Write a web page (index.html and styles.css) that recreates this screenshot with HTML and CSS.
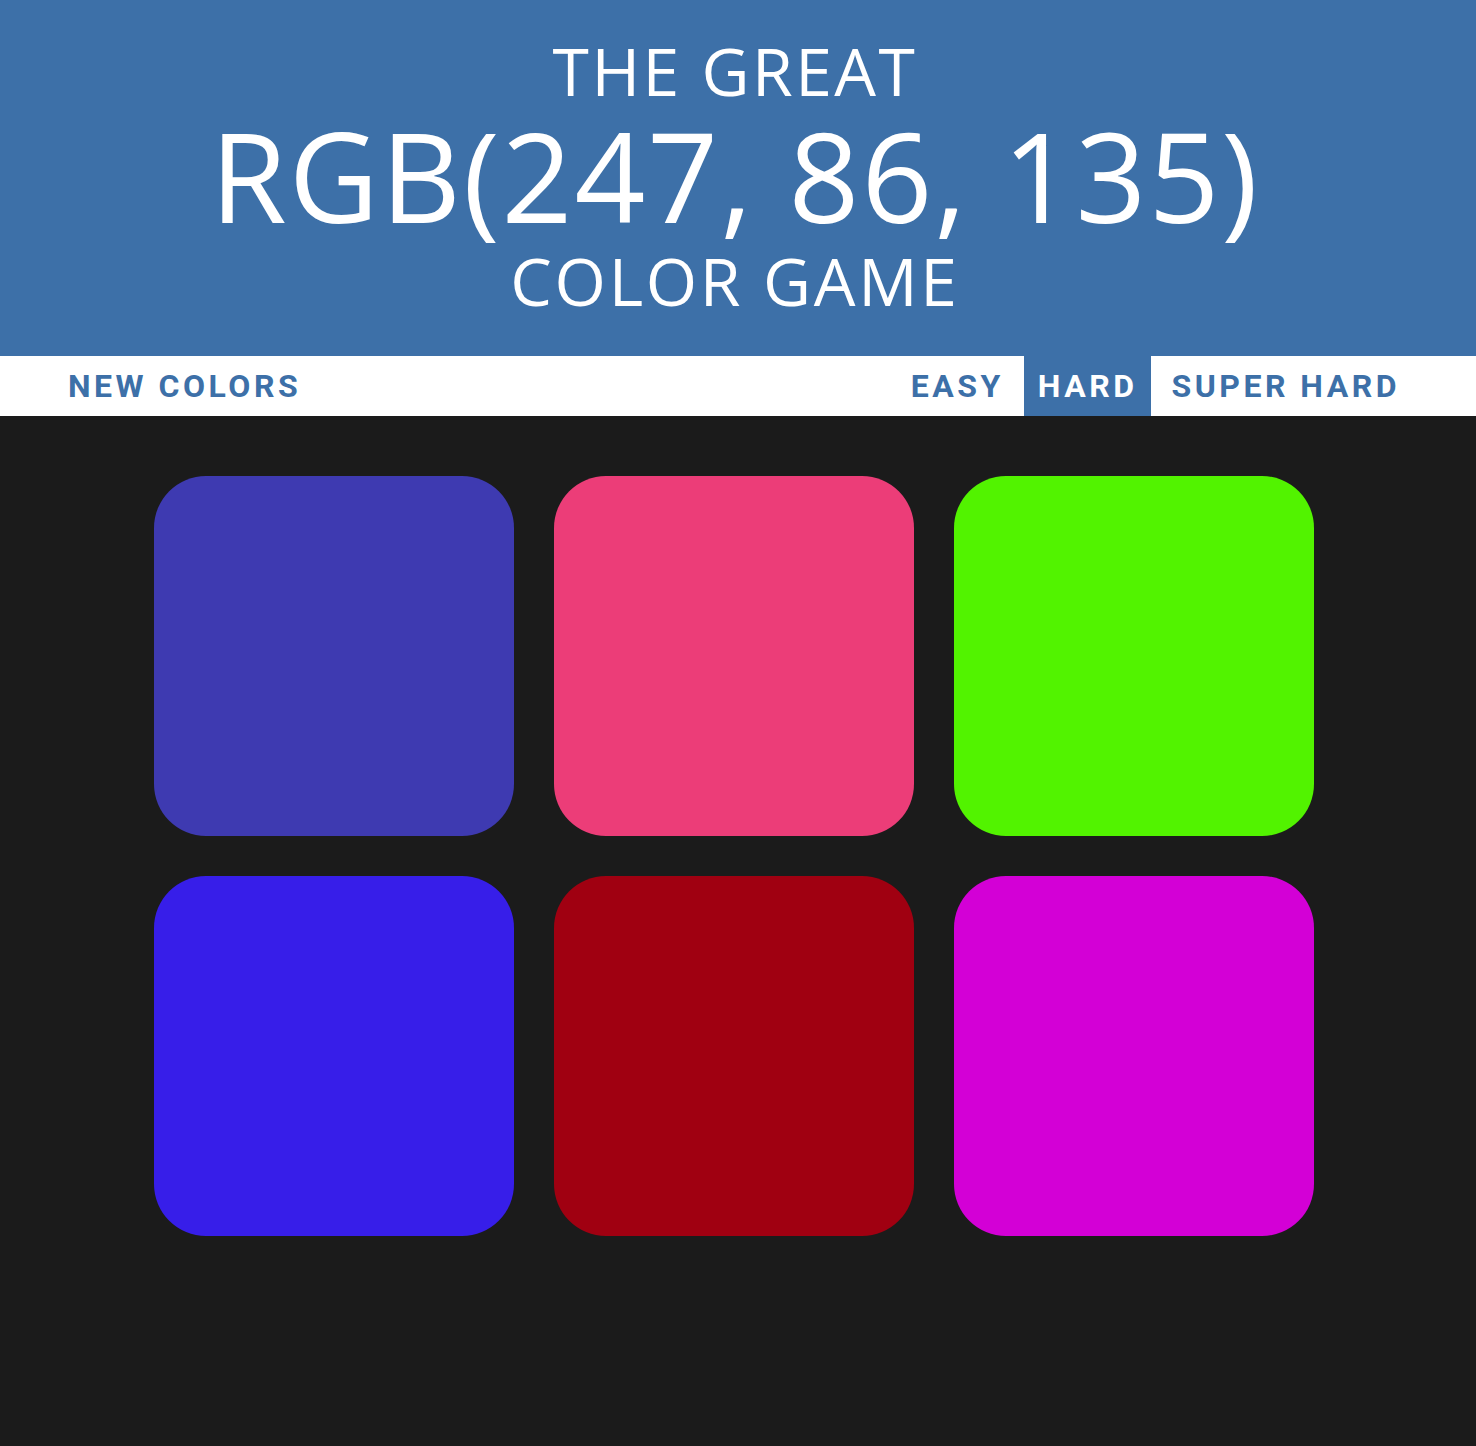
FILE: index.html
```html
<!DOCTYPE html>
<html>
<head>
<meta charset="utf-8">
<link rel="stylesheet" href="styles.css">
</head>
<body>
<header class="banner">
  <div class="line-small great">THE GREAT</div>
  <div class="line-big">RGB(247, 86, 135)</div>
  <div class="line-small game">COLOR GAME</div>
</header>
<nav class="bar">
  <button class="btn new">NEW COLORS</button>
  <div class="modes">
    <button class="btn">EASY</button>
    <button class="btn active">HARD</button>
    <button class="btn">SUPER HARD</button>
  </div>
</nav>
<main class="board">
  <div class="grid">
    <div class="sq" style="background: rgb(62, 58, 177)"></div>
    <div class="sq" style="background: rgb(236, 61, 120)"></div>
    <div class="sq" style="background: rgb(82, 243, 0)"></div>
    <div class="sq" style="background: rgb(55, 30, 233)"></div>
    <div class="sq" style="background: rgb(160, 0, 17)"></div>
    <div class="sq" style="background: rgb(211, 0, 214)"></div>
  </div>
</main>
</body>
</html>
```

FILE: styles.css
```css
html, body {
  margin: 0;
  padding: 0;
  background: #1b1b1b;
  height: 100%;
}
body {
  font-family: "Open Sans", sans-serif;
}
.banner {
  background: #3d70a8;
  color: #fff;
  height: 356px;
  box-sizing: border-box;
  padding: 30px 6px 0 0;
  text-align: center;
  font-family: "Open Sans", sans-serif;
  font-weight: 400;
}
.line-small {
  font-size: 66px;
  line-height: 80px;
}
.great {
  letter-spacing: 2.5px;
}
.game {
  letter-spacing: 2.7px;
}
.line-big {
  font-size: 124px;
  line-height: 130px;
  letter-spacing: 2px;
}
.bar {
  background: #fff;
  height: 60px;
  display: flex;
  justify-content: space-between;
  align-items: stretch;
  padding: 0 62px 0 54px;
}
.modes {
  display: flex;
  gap: 6px;
}
.btn {
  border: none;
  background: transparent;
  color: #3d70a8;
  font-family: Roboto, sans-serif;
  font-weight: 700;
  font-size: 32px;
  letter-spacing: 3.5px;
  padding: 0 14px;
  margin: 0;
  cursor: pointer;
}
.btn.active {
  background: #3d70a8;
  color: #fff;
}
.board {
  padding-top: 60px;
}
.grid {
  display: grid;
  grid-template-columns: repeat(3, 360px);
  gap: 40px;
  padding-left: 154px;
}
.sq {
  width: 360px;
  height: 360px;
  border-radius: 52px;
}
```
